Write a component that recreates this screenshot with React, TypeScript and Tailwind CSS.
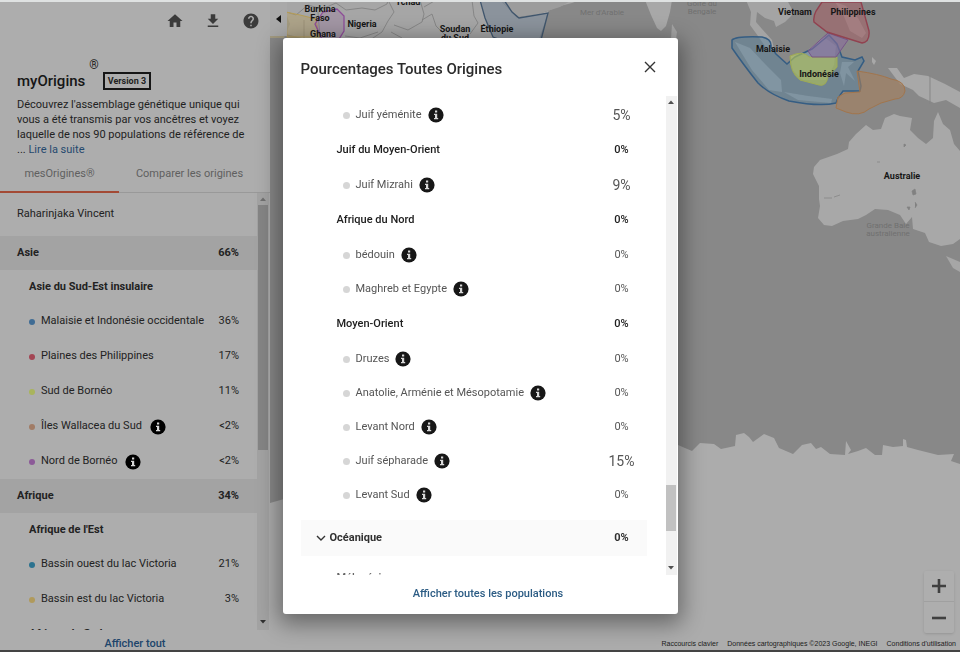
import type { ReactNode } from "react";
import { MdDownload, MdHelp, MdHome } from "react-icons/md";

type Row = {
  kind: 'region' | 'group' | 'leaf'
  name: string
  value: string
  color?: string
  info?: boolean
  large?: boolean
}

const myRows: Row[] = [
  { kind: 'region', name: 'Asie', value: '66%' },
  { kind: 'group', name: 'Asie du Sud-Est insulaire', value: '' },
  { kind: 'leaf', name: 'Malaisie et Indonésie occidentale', value: '36%', color: 'bg-[#3f6c94]' },
  { kind: 'leaf', name: 'Plaines des Philippines', value: '17%', color: 'bg-[#a34654]' },
  { kind: 'leaf', name: 'Sud de Bornéo', value: '11%', color: 'bg-[#a9b45c]' },
  { kind: 'leaf', name: 'Îles Wallacea du Sud', value: '<2%', color: 'bg-[#a17c66]', info: true },
  { kind: 'leaf', name: 'Nord de Bornéo', value: '<2%', color: 'bg-[#8c5a98]', info: true },
  { kind: 'region', name: 'Afrique', value: '34%' },
  { kind: 'group', name: "Afrique de l'Est", value: '' },
  { kind: 'leaf', name: 'Bassin ouest du lac Victoria', value: '21%', color: 'bg-[#2b728f]' },
  { kind: 'leaf', name: 'Bassin est du lac Victoria', value: '3%', color: 'bg-[#b09a5c]' },
  { kind: 'group', name: 'Afrique du Sud', value: '' },
]

const allRows: Row[] = [
  { kind: 'leaf', name: 'Juif yéménite', value: '5%', info: true, large: true },
  { kind: 'group', name: 'Juif du Moyen-Orient', value: '0%' },
  { kind: 'leaf', name: 'Juif Mizrahi', value: '9%', info: true, large: true },
  { kind: 'group', name: 'Afrique du Nord', value: '0%' },
  { kind: 'leaf', name: 'bédouin', value: '0%', info: true },
  { kind: 'leaf', name: 'Maghreb et Egypte', value: '0%', info: true },
  { kind: 'group', name: 'Moyen-Orient', value: '0%' },
  { kind: 'leaf', name: 'Druzes', value: '0%', info: true },
  { kind: 'leaf', name: 'Anatolie, Arménie et Mésopotamie', value: '0%', info: true },
  { kind: 'leaf', name: 'Levant Nord', value: '0%', info: true },
  { kind: 'leaf', name: 'Juif sépharade', value: '15%', info: true, large: true },
  { kind: 'leaf', name: 'Levant Sud', value: '0%', info: true },
]

function InfoButton({ name, className }: { name: string, className: string }) {
  return (
    <button type="button" aria-label={`Informations : ${name}`} className={`shrink-0 ${className}`}>
      <svg viewBox="0 0 16 16" className="size-4">
        <circle cx="8" cy="8" r="7.6" fill="currentColor" />
        <path d="M7 3.6h2.2v1.9H7zM6 6.7h3.2v4.2h1v1.4H6v-1.4h1V8.1H6z" fill="#d8d8d8" />
      </svg>
    </button>
  )
}

function ScrollArrow({ up, className }: { up?: boolean, className: string }) {
  return (
    <svg viewBox="0 0 6 4" className={`w-[6px] h-1 ${className}`}>
      <path d={up ? 'M0 4L3 0.5L6 4Z' : 'M0 0L3 3.5L6 0Z'} fill="currentColor" />
    </svg>
  )
}

function MapLabel({ x, y, children, dim }: { x: number, y: number, children: ReactNode, dim?: boolean }) {
  return (
    <text x={x} y={y} textAnchor="middle" fontSize={dim ? 8 : 9} fontWeight={dim ? 400 : 700} fill={dim ? '#707070' : '#161616'}>
      {children}
    </text>
  )
}

function WorldMap() {
  return (
    <svg viewBox="270 2 690 648" preserveAspectRatio="xMinYMin slice" className="absolute inset-0 size-full" role="img" aria-label="Carte des origines">
      <rect x="270" y="0" width="690" height="652" fill="#888888" />
      {/* Afrique */}
      <path d="M270 0H500L507 7L517 18L545 12L560 6L572 3L580 0H552L545 22L537 45H330L270 30Z" fill="#a6a6a6" />
      <path d="M500 0L518 17L538 14L560 7L572 0Z" fill="#9c9c9c" />
      <g fill="none" stroke="#7d7d7d" strokeWidth="0.8">
        <path d="M286 12L296 15L308 5L322 9L336 3L346 10L362 8L375 10L387 4L388 0" />
        <path d="M388 0L394 12L388 21L382 32L370 40M394 25L408 30L422 22L424 14L420 0M422 20L432 14L436 26L444 34L452 38M424 7L436 0M472 0L474 16L478 23L470 34M345 36L360 38L378 32M391 32L402 38M318 12L320 38M304 20L304 38" />
      </g>
      <path d="M286 12L300 15L316 19L319 37L287 37Z" fill="#b5a065" fillOpacity=".45" stroke="#b69d55" />
      <path d="M270 8L286 14L290 24L284 38H270Z" fill="#a29a80" />
      <path d="M323 12L337 9L344 16L344 31L339 39H322L315 24Z" fill="#9659a0" fillOpacity=".2" stroke="#8d4c98" strokeWidth="1.3" />
      <path d="M480 0L485 18L493 37L501 40H541L548 13L519 18L512 12L504 0Z" fill="#63788f" fillOpacity=".4" stroke="#40566d" strokeWidth="1.3" />
      {/* Inde, Sri Lanka */}
      <path d="M645 0L651 15L657 28L661 31L666 26L670 12L672 0Z" fill="#a8a8a8" />
      <path d="M672 24L677 32L676 39H671Z" fill="#a4a4a4" />
      {/* Asie du Sud-Est */}
      <path d="M746 0L751 12L750 25L758 36L767 49L775 53L772 40L762 29L756 22L757 12L765 18L774 21L776 27L785 22L794 13L787 0Z" fill="#a4a4a4" />
      <path d="M735 42L750 48L766 65L781 80L782 92L769 90L752 70Z" fill="#a7a7a7" />
      <path d="M791 56L807 51L824 37L836 46L834 65L826 80H803L792 70Z" fill="#a8a8a8" />
      <path d="M784 92L808 96L832 99L831 103L798 100ZM842 62L854 62L848 67L855 81L846 73L844 86L840 73Z" fill="#a5a5a5" />
      <path d="M835 2L846 6L858 18L866 33L862 38L850 31L843 14Z" fill="#a6a6a6" />
      <path d="M872 57L876 61L874 65L872 62ZM888 68L897 68L904 78L914 74L928 76L945 84L960 92V108L946 100L934 103L919 96L913 90L900 84Z" fill="#a8a8a8" />
      <path d="M930 75V104" stroke="#858585" />
      {/* zones */}
      <path d="M732 40Q736 36 762 37Q772 39 771 47L776 54L787 64L795 57L812 49L829 35L837 44L842 57L855 60L862 57L864 61L858 71L861 86L860 91L843 91L838 98L836 103Q820 107 789 101Q769 94 758 83Q743 64 732 48Z" fill="#55809e" fillOpacity=".45" stroke="#355d83" strokeWidth="1.5" />
      <path d="M790 56Q803 50 809 57H837L837 67L828 77Q826 87 819 85L800 80Q790 73 790 56Z" fill="#a8b95e" fillOpacity=".7" stroke="#9fab54" />
      <path d="M808 51L828 33L848 40L836 57H812Z" fill="#8b6e9d" fillOpacity=".6" stroke="#765589" />
      <path d="M822 2H861L869 31Q870 42 862 43L827 32L814 22Q813 17 816 11Z" fill="#a26268" fillOpacity=".6" stroke="#914250" strokeWidth="1.4" />
      <path d="M857 71Q879 74 891 79Q905 81 905 91Q903 99 895 99Q880 102 869 109Q860 117 846 112L836 108L838 97L845 93L860 92Z" fill="#a7815d" fillOpacity=".6" stroke="#a2754c" />
      {/* Australie */}
      <path d="M960 151L954 144L950 130L943 124L938 112L934 121L933 138L926 144L918 138L910 130L912 118L900 116L894 114L885 118L881 129L873 130L866 125L856 134L849 142L848 149L837 154L820 160L814 167L813 174L819 186L819 199L820 206L818 218L824 225L832 226L843 221L858 219L866 215L875 209L888 210L900 215L906 224L912 217L913 229L925 233L929 242L941 246L953 244L960 239Z" fill="#a8a8a8" />
      <path d="M912 191l3-2 1 5-3 1zM907 207l3 0-1 3zM904 144l2 1-2 2zM915 202l2 3-2 3M824 198h8M834 197l6-2M877 162h3" fill="#818181" stroke="#818181" strokeWidth=".7" />
      {/* Antarctique */}
      <path d="M270 503L284 499L300 480L340 462L420 450L500 451L590 442L670 447L678 445L692 451L700 443L714 444L721 449L735 446L736 435L744 433L749 437L753 442L764 434L774 438L779 448L793 454L802 445L811 443L816 449L821 447L830 454L845 455L846 441L851 450L848 454L858 451L866 448L875 455L882 455L883 445L893 447L903 446V439L906 440L907 447L918 450L938 455L954 454L951 461L960 464V652H270Z" fill="#acacac" />
      <path d="M946 256L960 262V272L953 268Z" fill="#a6a6a6" />
      <g fontFamily="Roboto, sans-serif">
        <MapLabel x={320} y={12}>Burkina</MapLabel>
        <MapLabel x={320} y={21}>Faso</MapLabel>
        <MapLabel x={323} y={37}>Ghana</MapLabel>
        <MapLabel x={362} y={27}>Nigeria</MapLabel>
        <MapLabel x={408} y={5}>Tchad</MapLabel>
        <MapLabel x={455} y={32}>Soudan</MapLabel>
        <MapLabel x={455} y={41}>du Sud</MapLabel>
        <MapLabel x={497} y={32}>Éthiopie</MapLabel>
        <MapLabel x={795} y={15}>Vietnam</MapLabel>
        <MapLabel x={853} y={15}>Philippines</MapLabel>
        <MapLabel x={773} y={52}>Malaisie</MapLabel>
        <MapLabel x={819} y={77}>Indonésie</MapLabel>
        <MapLabel x={902} y={179}>Australie</MapLabel>
        <MapLabel x={602} y={15} dim>Mer d'Arabie</MapLabel>
        <MapLabel x={702} y={6} dim>Golfe du</MapLabel>
        <MapLabel x={702} y={14} dim>Bengale</MapLabel>
        <MapLabel x={888} y={228} dim>Grande Baie</MapLabel>
        <MapLabel x={888} y={236} dim>australienne</MapLabel>
      </g>
    </svg>
  )
}

function Sidebar() {
  return (
    <aside className="relative flex w-[270px] shrink-0 flex-col bg-[#adadad] text-[#222222] shadow-md">
      <nav className="flex h-[38px] shrink-0 items-center justify-end gap-5 pr-[10px] text-[#3b3b3b]">
        <button type="button" aria-label="Accueil"><MdHome size={18} /></button>
        <button type="button" aria-label="Télécharger"><MdDownload size={18} /></button>
        <button type="button" aria-label="Aide"><MdHelp size={18} /></button>
      </nav>
      <div className="mt-[29px] flex shrink-0 items-center px-[17px]">
        <h1 className="text-[15px]/[24px] font-medium text-[#161616]">myOrigins</h1>
        <sup className="ml-1 text-[12px]/[12px] -top-4">®</sup>
        <span className="ml-1 border-2 border-[#161616] px-[3px] text-[9px]/[14px] font-bold">Version 3</span>
      </div>
      <p className="mt-1 shrink-0 px-[17px] text-[11px]/[15px]">
        Découvrez l'assemblage génétique unique qui vous a été transmis par vos ancêtres et voyez laquelle de nos 90 populations de référence de<br />
        ... <a href="#suite" className="text-[#25496e]">Lire la suite</a>
      </p>
      <div role="tablist" className="flex h-9 shrink-0 border-b border-[#999999] text-[11px] text-[#606060]">
        <button role="tab" type="button" aria-selected="true" className="-mb-px w-[119px] border-b-2 border-[#a34a35]">mesOrigines®</button>
        <button role="tab" type="button" aria-selected="false" className="flex-1 pr-[10px]">Comparer les origines</button>
      </div>
      <div className="flex min-h-0 flex-1">
        <div className="min-w-0 flex-1 overflow-hidden text-[11px]">
          <p className="flex h-[43px] items-center px-[17px]">Raharinjaka Vincent</p>
          {myRows.map(row => (
            <div key={row.name} className={`flex items-center pr-[18px] ${row.kind === 'region' ? 'h-[34px] bg-[#a3a3a3] pl-[17px] font-bold' : row.kind === 'group' ? 'h-[34px] pl-[29px] font-bold' : 'h-[35px] pl-[29px]'}`}>
              {row.kind === 'leaf' && <span className={`mr-[6px] size-[6px] shrink-0 rounded-full ${row.color}`} />}
              <span className="whitespace-nowrap">{row.name}</span>
              {row.info && <InfoButton name={row.name} className="ml-2 text-black" />}
              <span className="ml-auto">{row.value}</span>
            </div>
          ))}
        </div>
        <div className="mr-[1px] flex w-3 shrink-0 flex-col items-center bg-[#a3a3a3] text-[#303030]">
          <ScrollArrow up className="my-1 text-[#707070]" />
          <div className="h-[56%] w-[10px] bg-[#858585]" />
          <ScrollArrow className="mt-auto mb-[6px]" />
        </div>
      </div>
      <a href="#tout" className="shrink-0 pt-2 text-center text-[11px]/[12px] font-medium text-[#20456b]">Afficher tout</a>
    </aside>
  )
}

function OriginsDialog() {
  return (
    <section role="dialog" aria-modal="true" aria-labelledby="dialog-title" className="flex h-full w-full max-w-[395px] flex-col rounded-[3px] bg-white shadow-[0_6px_22px_4px_rgba(0,0,0,0.4)]">
      <header className="flex h-[58px] shrink-0 items-center justify-between pr-[21px] pl-[18px]">
        <h2 id="dialog-title" className="pt-1 text-[15px] font-medium text-[#2b2b2b]">Pourcentages Toutes Origines</h2>
        <button type="button" aria-label="Fermer">
          <svg viewBox="0 0 14 14" className="size-[14px]">
            <path d="M2 2L12 12M12 2L2 12" stroke="#333333" strokeWidth="1.4" />
          </svg>
        </button>
      </header>
      <div className="flex min-h-0 flex-1">
        <div className="min-w-0 flex-1 overflow-hidden pr-[19px] pl-[18px] pt-[2px] text-[11px]">
          {allRows.map(row => (
            <div key={row.name} className={`flex items-center pr-[3px] ${row.kind === 'group' ? 'h-9 pl-9 font-medium text-[#202020]' : 'h-[34px] pl-[42px] text-[#555555]'}`}>
              {row.kind === 'leaf' && <span className="mr-[6px] size-[7px] shrink-0 rounded-full bg-[#d6d6d6]" />}
              <span>{row.name}</span>
              {row.info && <InfoButton name={row.name} className="ml-[6px] text-[#171717]" />}
              <span className={`ml-auto w-[44px] text-center ${row.large ? 'text-[14px]' : ''}`}>{row.value}</span>
            </div>
          ))}
          <button type="button" className="mt-2 flex h-9 w-full items-center bg-[#fafafa] pr-[3px] pl-[15px] font-bold text-[#303030]">
            <svg viewBox="0 0 10 10" className="mr-1 size-[10px]">
              <path d="M1 3L5 7L9 3" fill="none" stroke="#333333" strokeWidth="1.4" />
            </svg>
            Océanique
            <span className="ml-auto w-[44px] text-center">0%</span>
          </button>
          <p className="pt-[14px] pl-9 font-medium text-[#666666]">Mélanésie</p>
        </div>
        <div className="mr-[1px] flex w-[11px] shrink-0 flex-col items-center bg-[#f1f1f1] text-[#505050]">
          <ScrollArrow up className="mt-1" />
          <div className="mt-auto h-[46px] w-[10px] bg-[#c1c1c1]" />
          <ScrollArrow className="mt-[35px] mb-[5px]" />
        </div>
      </div>
      <footer className="flex h-[39px] shrink-0 items-center justify-center pl-4">
        <a href="#populations" className="text-[11px] font-medium text-[#2c5c84]">Afficher toutes les populations</a>
      </footer>
    </section>
  )
}

export default function App() {
  return (
    <div className="flex h-screen overflow-hidden border-t-2 border-b-2 border-t-[#dfe2e2] border-b-[#444444] bg-[#888888] font-['Roboto',sans-serif]">
      <Sidebar />
      <main className="relative min-w-0 flex-1 overflow-hidden">
        <WorldMap />
        <button type="button" aria-label="Réduire le panneau" className="absolute top-0 left-0 flex h-[34px] w-[17px] items-center justify-center bg-[#a9a9a9]">
          <svg viewBox="0 0 5 8" className="h-2 w-[5px]"><path d="M5 0V8L0 4Z" fill="#111111" /></svg>
        </button>
        <div className="absolute right-[6px] bottom-[17px] flex w-[30px] flex-col divide-y divide-[#a0a0a0] rounded-[2px] bg-[#aeaeae] text-[#404040] shadow-sm">
          <button type="button" aria-label="Zoom avant" className="flex h-[31px] items-center justify-center">
            <svg viewBox="0 0 14 14" className="size-[14px]"><path d="M7 0V14M0 7H14" stroke="currentColor" strokeWidth="2.6" /></svg>
          </button>
          <button type="button" aria-label="Zoom arrière" className="flex h-[31px] items-center justify-center">
            <svg viewBox="0 0 14 14" className="size-[14px]"><path d="M0 7H14" stroke="currentColor" strokeWidth="2.6" /></svg>
          </button>
        </div>
        <div className="absolute right-1 bottom-0 flex gap-[9px] font-['Liberation_Sans',sans-serif] text-[7px]/[12px] whitespace-nowrap text-[#202020]">
          <button type="button">Raccourcis clavier</button>
          <span>Données cartographiques ©2023 Google, INEGI</span>
          <a href="#conditions">Conditions d'utilisation</a>
        </div>
      </main>
      <div className="fixed inset-0 flex items-center justify-center py-[38px]">
        <OriginsDialog />
      </div>
    </div>
  )
}
